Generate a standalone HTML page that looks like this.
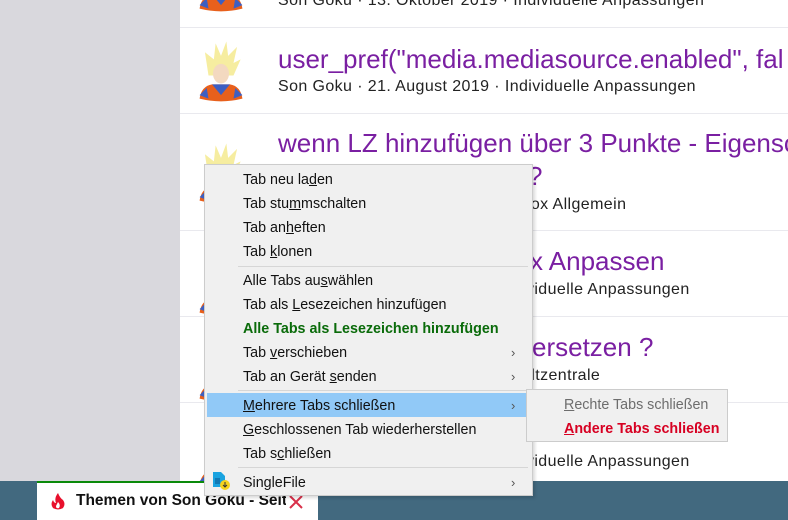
<!DOCTYPE html>
<html><head><meta charset="utf-8"><style>
*{margin:0;padding:0;box-sizing:border-box}
body{width:788px;height:520px;overflow:hidden;position:relative;background:#fff;font-family:"Liberation Sans",sans-serif}
.left{position:absolute;left:0;top:0;width:180px;height:481px;background:#d9d8dd}
.sep{position:absolute;left:180px;width:608px;height:1px;background:#e9e9ee}
.t{position:absolute;left:278px;color:#7a1fa2;font-size:26px;white-space:nowrap}
.m{position:absolute;left:278px;color:#222;font-size:16px;white-space:nowrap;letter-spacing:0.4px}
.av{position:absolute;left:196px;width:50px;height:66px}
.bar{position:absolute;left:0;top:481px;width:788px;height:39px;background:#42697f}
.tab{position:absolute;left:37px;top:481px;width:281px;height:39px;background:#fff;border-top:2px solid #0a8a0a}
.tab .tt{position:absolute;left:39px;top:9px;width:210px;overflow:hidden;font-weight:bold;font-size:15.5px;color:#111;white-space:nowrap}
.menu{position:absolute;left:204px;top:164px;width:329px;height:332px;background:#f0f0f0;border:1px solid #ccc;box-shadow:2px 2px 3px rgba(0,0,0,.15)}
.it{position:absolute;left:38px;font-size:14.3px;color:#111;white-space:nowrap}
.ms{position:absolute;left:33px;width:290px;height:1px;background:#d6d6d6}
.ar{position:absolute;left:306px;font-size:13px;color:#555}
.hl{position:absolute;left:2px;top:228px;width:323px;height:24px;background:#91c9f7}
.sub{position:absolute;left:526px;top:389px;width:202px;height:53px;background:#f0f0f0;border:1px solid #ccc}
</style></head><body>
<div class="left"></div>
<svg width="0" height="0" style="position:absolute"><defs><g id="g">
<path d="M14 40 L10 14 L20 22 L22 4 L28 18 L34 2 L36 18 L46 8 L42 26 L50 22 L42 40Z" fill="#f6eda0"/>
<ellipse cx="28" cy="38" rx="9" ry="11" fill="#f3d9c0"/>
<path d="M4 66 Q6 52 18 50 L38 50 Q50 52 52 66 Q28 72 4 66Z" fill="#e8601c"/>
<path d="M18 50 L28 62 L38 50Z" fill="#3d5fc2"/>
<path d="M4 62 L12 54 L14 66Z M52 62 L44 54 L42 66Z" fill="#3d5fc2"/>
</g></defs></svg>
<svg class="av" style="top:-52px" viewBox="0 0 56 70"><use href="#g"/></svg>
<div class="sep" style="top:27px"></div>
<svg class="av" style="top:38px" viewBox="0 0 56 70"><use href="#g"/></svg>
<div class="t" style="top:44px">user_pref("media.mediasource.enabled", fal</div>
<div class="m" style="top:78px">Son Goku · 21. August 2019 · Individuelle Anpassungen</div>
<div class="m" style="top:-8px">Son Goku · 13. Oktober 2019 · Individuelle Anpassungen</div>
<div class="sep" style="top:113px"></div>
<svg class="av" style="top:140px" viewBox="0 0 56 70"><use href="#g"/></svg>
<div class="t" style="top:128px">wenn LZ hinzufügen über 3 Punkte - Eigensc</div>
<div class="t" style="top:161px;left:528px">?</div>
<div class="m" style="top:196px;left:526px">fox Allgemein</div>
<div class="sep" style="top:230px"></div>
<svg class="av" style="top:252px" viewBox="0 0 56 70"><use href="#g"/></svg>
<div class="t" style="top:246px;left:530px">x Anpassen</div>
<div class="m" style="top:281px;left:522px">ividuelle Anpassungen</div>
<div class="sep" style="top:316px"></div>
<svg class="av" style="top:338px" viewBox="0 0 56 70"><use href="#g"/></svg>
<div class="t" style="top:332px;left:532px">ersetzen ?</div>
<div class="m" style="top:367px;left:522px">altzentrale</div>
<div class="sep" style="top:402px"></div>
<svg class="av" style="top:424px" viewBox="0 0 56 70"><use href="#g"/></svg>
<div class="m" style="top:453px;left:522px">ividuelle Anpassungen</div>
<div class="bar"></div>
<div class="tab"><svg style="position:absolute;left:13px;top:9px" width="16" height="18" viewBox="0 0 16 18"><path d="M8 1 Q10 6 13 8 Q16 12 13 16 Q8 19 3 16 Q0 12 3 8 Q4 11 6 11 Q4 6 8 1Z" fill="#e8102c"/><path d="M8 10 Q11 13 9 16 Q6 17 6 14Z" fill="#fff"/></svg><div class="tt">Themen von Son Goku - Seite</div><svg style="position:absolute;left:252px;top:12px" width="14" height="14" viewBox="0 0 14 14"><path d="M1 1 L13 13 M13 1 L1 13" stroke="#d9304a" stroke-width="2"/></svg></div>
<div class="menu">
<div class="it" style="top:7px">Tab neu la<u>d</u>en</div>
<div class="it" style="top:31px">Tab stu<u>m</u>mschalten</div>
<div class="it" style="top:55px">Tab an<u>h</u>eften</div>
<div class="it" style="top:79px">Tab <u>k</u>lonen</div>
<div class="ms" style="top:101px"></div>
<div class="it" style="top:108px">Alle Tabs au<u>s</u>wählen</div>
<div class="it" style="top:132px">Tab als <u>L</u>esezeichen hinzufügen</div>
<div class="it" style="top:156px;color:#0a6b0a;font-weight:bold">Alle Tabs als Lesezeichen hinzufügen</div>
<div class="it" style="top:180px">Tab <u>v</u>erschieben</div><div class="ar" style="top:180px">›</div>
<div class="it" style="top:204px">Tab an Gerät <u>s</u>enden</div><div class="ar" style="top:204px">›</div>
<div class="ms" style="top:225px"></div>
<div class="hl"></div>
<div class="it" style="top:233px"><u>M</u>ehrere Tabs schließen</div><div class="ar" style="top:233px">›</div>
<div class="it" style="top:257px"><u>G</u>eschlossenen Tab wiederherstellen</div>
<div class="it" style="top:281px">Tab s<u>c</u>hließen</div>
<div class="ms" style="top:302px"></div>
<svg style="position:absolute;left:7px;top:306px" width="20" height="20" viewBox="0 0 20 20"><path d="M1 1 H9 L13 5 V16 H1Z" fill="#1aa3e0"/><path d="M3 8 H8 M3 10 H8 M3 12 H8" stroke="#0a4f88" stroke-width="1"/><circle cx="13" cy="14" r="5" fill="#f6d31c"/><path d="M13 11 V16 M11 14 L13 16 L15 14" stroke="#333" stroke-width="1" fill="none"/></svg>
<div class="it" style="top:310px">SingleFile</div><div class="ar" style="top:310px">›</div>
</div>
<div class="sub">
<div class="it" style="left:37px;top:7px;color:#6d6d6d"><u>R</u>echte Tabs schließen</div>
<div class="it" style="left:37px;top:31px;color:#d70022;font-weight:bold"><u>A</u>ndere Tabs schließen</div>
</div>
</body></html>
